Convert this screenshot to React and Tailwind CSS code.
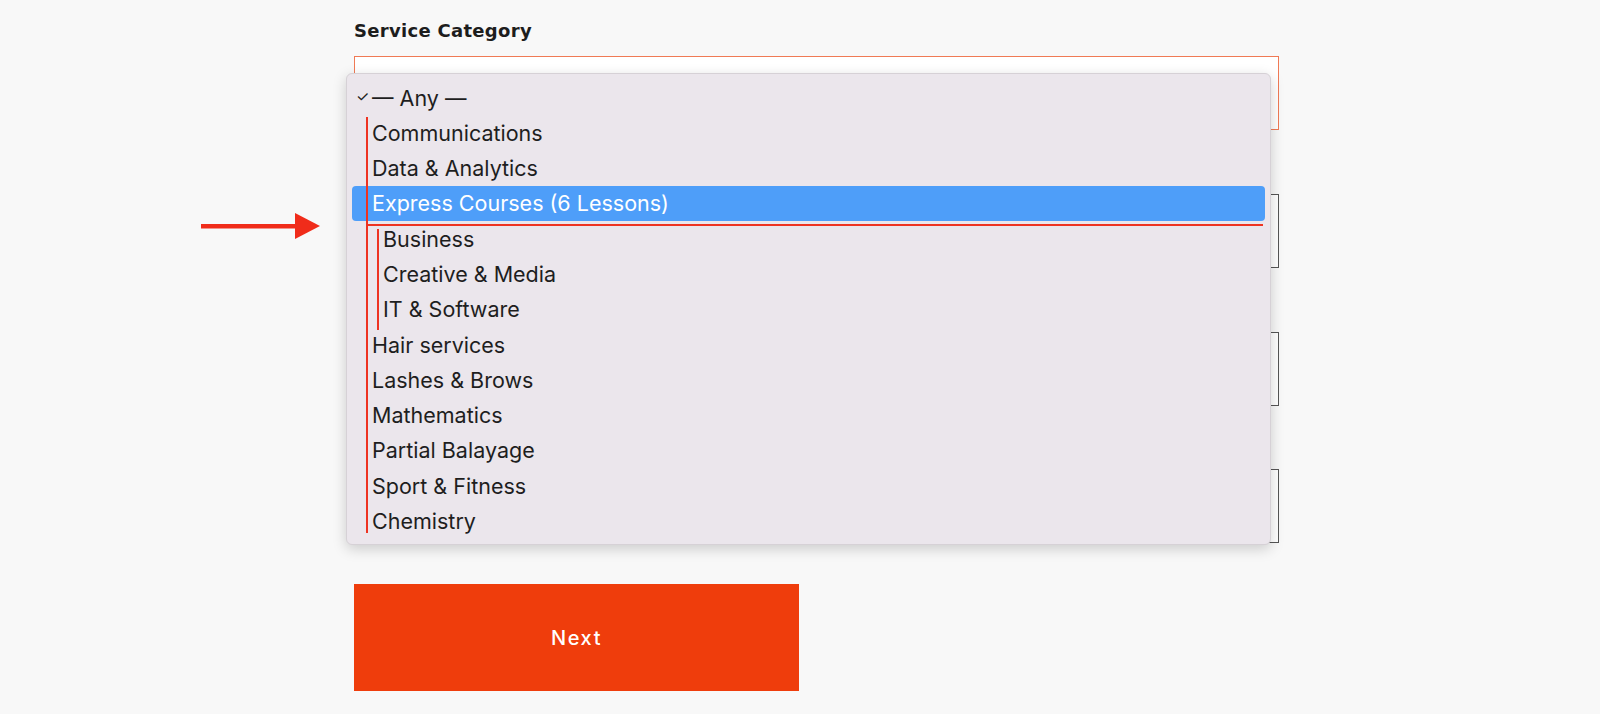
import React from "react";

const options = [
  { label: "— Any —", level: 0, checked: true },
  { label: "Communications", level: 0 },
  { label: "Data & Analytics", level: 0 },
  { label: "Express Courses (6 Lessons)", level: 0, active: true },
  { label: "Business", level: 1 },
  { label: "Creative & Media", level: 1 },
  { label: "IT & Software", level: 1 },
  { label: "Hair services", level: 0 },
  { label: "Lashes & Brows", level: 0 },
  { label: "Mathematics", level: 0 },
  { label: "Partial Balayage", level: 0 },
  { label: "Sport & Fitness", level: 0 },
  { label: "Chemistry", level: 0 },
];

export default function App() {
  return (
    <div className="relative h-[714px] overflow-hidden bg-[#f8f8f8] font-['Inter',sans-serif]">
      {/* FORM */}
      <div className="ml-[354px] w-[925px] pt-[19px] flex flex-col">
        <label className="h-[24px] leading-[24px] text-[18px] font-semibold tracking-[0.3px] text-[#1d1d1d] font-['DejaVu_Sans',sans-serif]">
          Service Category
        </label>
        <div className="mt-[13px] h-[74px] border border-[#f07a55] bg-white" />

        <div className="mt-[64px] h-[74px] border border-[#555] bg-white" />
        <div className="mt-[64px] h-[74px] border border-[#555] bg-white" />
        <div className="mt-[63px] h-[74px] border border-[#555] bg-white" />

        <button className="mt-[41px] w-[445px] h-[107px] bg-[#ef3d0c] text-white text-[20px] font-medium tracking-[1.6px]">
          Next
        </button>
      </div>

      {/* DROPDOWN */}
      <div className="absolute left-[346px] top-[73px] w-[925px] h-[472px] rounded-[6px] bg-[#ebe6ec] border border-[#d6d1d6] shadow-[0_4px_14px_rgba(0,0,0,0.18)] px-[5px] pt-[6px]">
        {options.map((o) => (
          <div
            key={o.label}
            className={`relative flex items-center h-[35.3px] text-[21.5px] rounded-[4px] ${
              o.active ? "bg-[#4e9ef9] text-white" : "text-[#1e1e1e]"
            } ${o.level ? "pl-[31px]" : "pl-[20px]"}`}
          >
            {o.checked && (
              <span className="absolute left-[4px] text-[15px] text-[#222]">✓</span>
            )}
            {o.label}
          </div>
        ))}
      </div>

      {/* ANNOTATIONS */}
      <div className="absolute left-[366px] top-[117px] w-[2px] h-[416px] bg-[#ee3322]" />
      <div className="absolute left-[377px] top-[229px] w-[2px] h-[101px] bg-[#ee3322]" />
      <div className="absolute left-[368px] top-[224px] w-[895px] h-[2px] bg-[#ee3322]" />
      <svg
        className="absolute left-[199px] top-[211px]"
        width="124"
        height="30"
        viewBox="0 0 124 30"
      >
        <rect x="2" y="13" width="96" height="4.5" fill="#f02c1a" />
        <polygon points="96,2 121,15 96,28" fill="#f02c1a" />
      </svg>
    </div>
  );
}
